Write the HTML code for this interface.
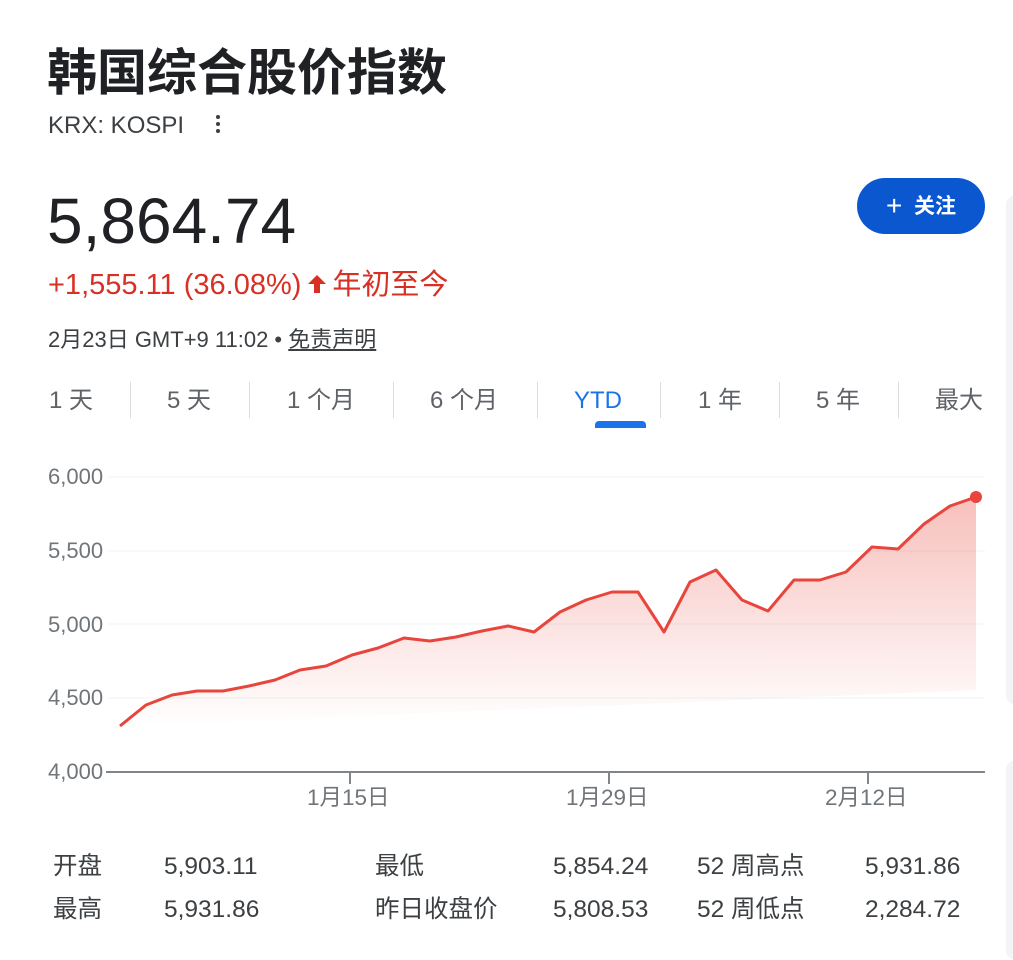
<!DOCTYPE html>
<html><head><meta charset="utf-8"><style>
*{margin:0;padding:0;box-sizing:border-box}
body{width:1013px;height:942px;background:#fff;position:relative;overflow:hidden;font-family:"Liberation Sans","Noto Sans CJK SC",sans-serif;color:#202124}
.a{position:absolute;white-space:nowrap}
.tab{position:absolute;top:384px;font-size:24px;line-height:34px;color:#5f6368;}
.sep{position:absolute;top:382px;width:1px;height:36px;background:#dadce0}
.st{position:absolute;font-size:24.5px;line-height:30px;color:#3c4043}
.yl{position:absolute;left:48px;font-size:22px;line-height:24px;color:#70757a}
.xl{position:absolute;top:785px;font-size:22.5px;line-height:26px;color:#70757a}
</style></head><body>
<div class="a" style="left:47px;top:38px;font-size:50px;line-height:70px;font-weight:bold;color:#202124">韩国综合股价指数</div>
<div class="a" style="left:48px;top:111px;font-size:24px;line-height:30px;color:#3c4043">KRX: KOSPI</div>
<div class="a" style="left:216px;top:113px;width:5px;height:24px">
<div style="position:absolute;left:0;top:2px;width:4px;height:4px;border-radius:2px;background:#3c4043"></div>
<div style="position:absolute;left:0;top:9px;width:4px;height:4px;border-radius:2px;background:#3c4043"></div>
<div style="position:absolute;left:0;top:16px;width:4px;height:4px;border-radius:2px;background:#3c4043"></div></div>
<div class="a" style="left:47px;top:183px;font-size:64px;line-height:76px;color:#202124">5,864.74</div>
<div class="a" style="left:48px;top:267px;font-size:29px;line-height:36px;color:#d93025">+1,555.11 (36.08%)<svg width="24" height="24" viewBox="0 0 24 24" style="vertical-align:-2px;margin:0 3px 0 4px"><path d="M12 3 L21 12 L15 12 L15 21 L9 21 L9 12 L3 12 Z" fill="#d93025"/></svg>年初至今</div>
<div class="a" style="left:48px;top:326px;font-size:22px;line-height:28px;color:#3c4043">2月23日 GMT+9 11:02 • <span style="text-decoration:underline">免责声明</span></div>
<div class="a" style="left:857px;top:178px;width:128px;height:56px;border-radius:28px;background:#0b57d0;color:#fff;font-size:21px;font-weight:bold;text-align:center;line-height:55px"><span style="font-weight:normal;font-size:28px;vertical-align:-2px">+</span>&nbsp; 关注</div>
<div class="a" style="left:1006px;top:195px;width:20px;height:510px;border-radius:14px;background:#f3f4f6"></div>
<div class="a" style="left:1006px;top:760px;width:20px;height:200px;border-radius:14px;background:#f3f4f6"></div>
<div class="tab" style="left:49px">1 天</div>
<div class="sep" style="left:130px"></div>
<div class="tab" style="left:167px">5 天</div>
<div class="sep" style="left:249px"></div>
<div class="tab" style="left:287px">1 个月</div>
<div class="sep" style="left:393px"></div>
<div class="tab" style="left:430px">6 个月</div>
<div class="sep" style="left:537px"></div>
<div class="tab" style="left:574px;color:#1a73e8">YTD</div>
<div class="a" style="left:595px;top:421px;width:51px;height:7px;border-radius:4px 4px 0 0;background:#1a73e8"></div>
<div class="sep" style="left:660px"></div>
<div class="tab" style="left:698px">1 年</div>
<div class="sep" style="left:779px"></div>
<div class="tab" style="left:816px">5 年</div>
<div class="sep" style="left:898px"></div>
<div class="tab" style="left:935px">最大</div>
<div class="yl" style="top:465px">6,000</div>
<div class="yl" style="top:539px">5,500</div>
<div class="yl" style="top:613px">5,000</div>
<div class="yl" style="top:686px">4,500</div>
<div class="yl" style="top:760px">4,000</div>
<svg class="a" style="left:0;top:0" width="1013" height="942">
<defs><linearGradient id="g" x1="0" y1="0" x2="0" y2="1"><stop offset="0" stop-color="#e84a3f" stop-opacity="0.35"/><stop offset="1" stop-color="#e84a3f" stop-opacity="0"/></linearGradient></defs>
<g stroke="#f1f3f4" stroke-width="1"><line x1="108" y1="477" x2="985" y2="477"/><line x1="108" y1="551" x2="985" y2="551"/><line x1="108" y1="624" x2="985" y2="624"/><line x1="108" y1="698" x2="985" y2="698"/></g>
<path d="M120,726 L146,705 172,695 197,691 223,691 249,686 275,680 300,670 326,666 352,655 378,648 404,638 430,641 456,637 482,631 508,626 534,632 560,612 586,600 612,592 638,592 664,632 690,582 716,570 742,600 768,611 794,580 820,580 846,572 872,547 898,549 924,524 950,506 976,497 L976,690 L120,726 Z" fill="url(#g)"/>
<polyline fill="none" stroke="#e8453c" stroke-width="3" stroke-linejoin="round" points="120,726 146,705 172,695 197,691 223,691 249,686 275,680 300,670 326,666 352,655 378,648 404,638 430,641 456,637 482,631 508,626 534,632 560,612 586,600 612,592 638,592 664,632 690,582 716,570 742,600 768,611 794,580 820,580 846,572 872,547 898,549 924,524 950,506 976,497"/>
<circle cx="976" cy="497" r="6" fill="#e8453c"/>
<line x1="106" y1="772" x2="985" y2="772" stroke="#80868b" stroke-width="2"/>
<g stroke="#80868b" stroke-width="2"><line x1="350" y1="772" x2="350" y2="784"/><line x1="609" y1="772" x2="609" y2="784"/><line x1="868" y1="772" x2="868" y2="784"/></g>
</svg>
<div class="xl" style="left:307px">1月15日</div>
<div class="xl" style="left:566px">1月29日</div>
<div class="xl" style="left:825px">2月12日</div>
<div class="st" style="left:53px;top:852px">开盘</div>
<div class="st" style="left:164px;top:852px">5,903.11</div>
<div class="st" style="left:375px;top:852px">最低</div>
<div class="st" style="left:553px;top:852px">5,854.24</div>
<div class="st" style="left:697px;top:852px">52 周高点</div>
<div class="st" style="left:865px;top:852px">5,931.86</div>
<div class="st" style="left:53px;top:895px">最高</div>
<div class="st" style="left:164px;top:895px">5,931.86</div>
<div class="st" style="left:375px;top:895px">昨日收盘价</div>
<div class="st" style="left:553px;top:895px">5,808.53</div>
<div class="st" style="left:697px;top:895px">52 周低点</div>
<div class="st" style="left:865px;top:895px">2,284.72</div>
</body></html>
